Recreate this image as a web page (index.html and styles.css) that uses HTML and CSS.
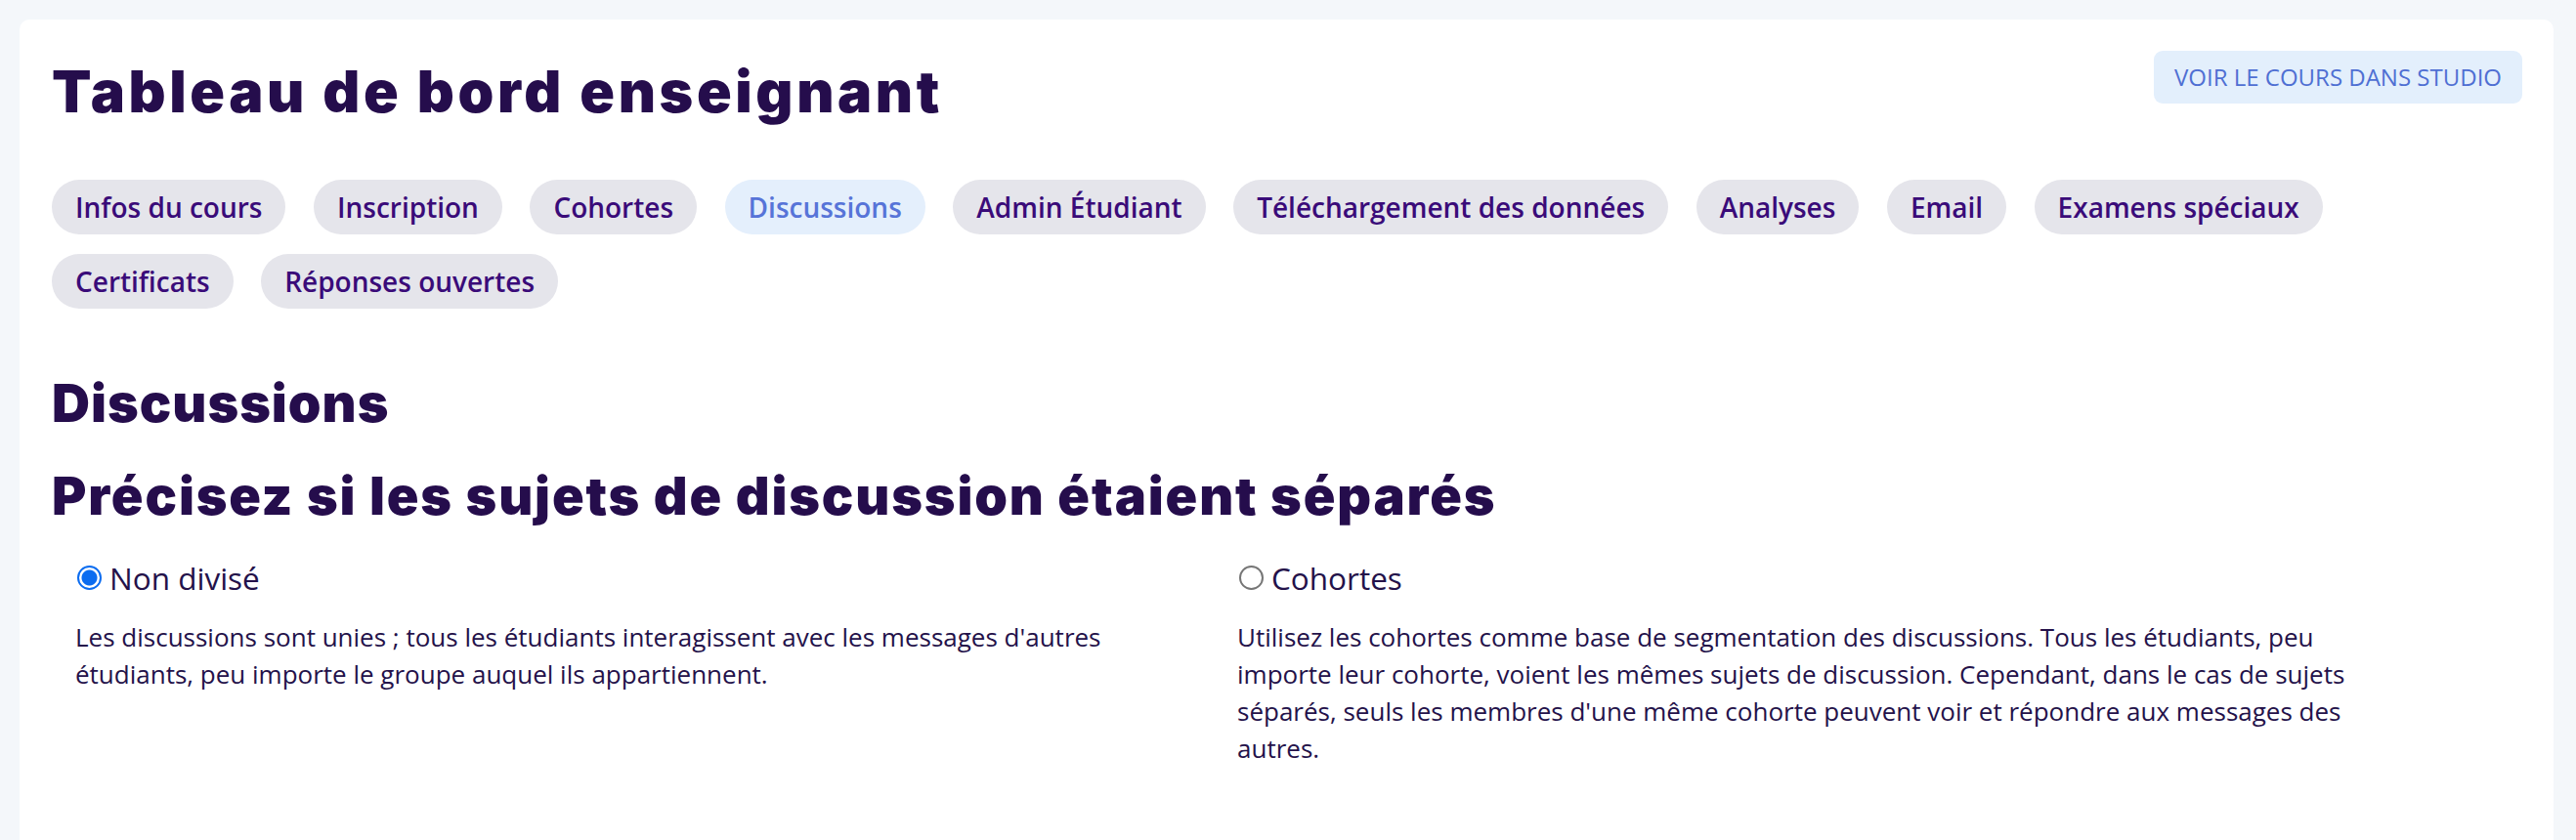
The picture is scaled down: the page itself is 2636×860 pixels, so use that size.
FILE: index.html
```html
<!DOCTYPE html>
<html lang="fr">
<head>
<meta charset="utf-8">
<title>Tableau de bord enseignant</title>
<link rel="stylesheet" href="styles.css">
</head>
<body>
<div class="page">
  <main class="card">
    <header class="header">
      <h1 class="title">Tableau de bord enseignant</h1>
      <a class="studio-btn" href="#">Voir le cours dans Studio</a>
    </header>
    <nav class="tabs">
      <a class="tab" href="#">Infos du cours</a>
      <a class="tab" href="#">Inscription</a>
      <a class="tab" href="#">Cohortes</a>
      <a class="tab tab-active" href="#">Discussions</a>
      <a class="tab" href="#">Admin Étudiant</a>
      <a class="tab" href="#">Téléchargement des données</a>
      <a class="tab" href="#">Analyses</a>
      <a class="tab" href="#">Email</a>
      <a class="tab" href="#">Examens spéciaux</a>
      <a class="tab" href="#">Certificats</a>
      <a class="tab" href="#">Réponses ouvertes</a>
    </nav>
    <section class="section">
      <h2 class="section-title">Discussions</h2>
      <h2 class="section-subtitle">Précisez si les sujets de discussion étaient séparés</h2>
      <div class="options">
        <div class="option">
          <label class="option-label">
            <input class="radio" type="radio" name="division" checked>
            <span>Non divisé</span>
          </label>
          <p class="option-desc">Les discussions sont unies ; tous les étudiants interagissent avec les messages d'autres étudiants, peu importe le groupe auquel ils appartiennent.</p>
        </div>
        <div class="option">
          <label class="option-label">
            <input class="radio" type="radio" name="division">
            <span>Cohortes</span>
          </label>
          <p class="option-desc">Utilisez les cohortes comme base de segmentation des discussions. Tous les étudiants, peu importe leur cohorte, voient les mêmes sujets de discussion. Cependant, dans le cas de sujets séparés, seuls les membres d'une même cohorte peuvent voir et répondre aux messages des autres.</p>
        </div>
      </div>
    </section>
  </main>
</div>
</body>
</html>
```

FILE: styles.css
```css
html, body {
  margin: 0;
  padding: 0;
  background: #f4f7fa;
  font-family: "Open Sans", "Liberation Sans", sans-serif;
}

.page {
  padding: 20px 23px 0 20px;
}

.card {
  background: #ffffff;
  border-radius: 10px;
  padding: 33px 32px 60px 33px;
  min-height: 900px;
  box-sizing: border-box;
}

.header {
  display: flex;
  justify-content: space-between;
  align-items: flex-start;
}

.title {
  margin: 0;
  font-family: "Inter", "DejaVu Sans", sans-serif;
  font-weight: 900;
  font-size: 59px;
  line-height: 81px;
  color: #250d4c;
  letter-spacing: 3.6px;
}

.studio-btn {
  display: block;
  margin-top: -1px;
  padding: 9px 21px;
  line-height: 36px;
  font-size: 24px;
  text-transform: uppercase;
  text-decoration: none;
  color: #4f6fd3;
  background: #e3effc;
  border-radius: 9px;
}

.tabs {
  display: flex;
  flex-wrap: wrap;
  column-gap: 28.5px;
  row-gap: 20px;
  margin-top: 50px;
}

.tab {
  display: block;
  padding: 8px 24px;
  line-height: 40px;
  font-size: 28px;
  font-weight: 600;
  color: #3a0b79;
  background: #e5e5eb;
  border-radius: 28px;
  text-decoration: none;
}

.tab-active {
  color: #5774d8;
  background: #e4effc;
}

.section {
  margin-top: 64px;
}

.section-title,
.section-subtitle {
  margin: 0;
  font-family: "Inter", "DejaVu Sans", sans-serif;
  font-weight: 900;
  font-size: 54px;
  line-height: 65px;
  color: #250d4c;
}

.section-title {
  letter-spacing: 1px;
}

.section-subtitle {
  margin-top: 30px;
  letter-spacing: 1.85px;
}

.options {
  display: grid;
  grid-template-columns: 1150px 1150px;
  column-gap: 39px;
  padding-left: 24px;
  margin-top: 29px;
}

.option-label {
  display: flex;
  align-items: center;
  gap: 8px;
  font-size: 31.5px;
  line-height: 45px;
  color: #24124a;
}

.radio {
  appearance: none;
  -webkit-appearance: none;
  margin: 0 0 0 2px;
  width: 25px;
  height: 25px;
  border-radius: 50%;
  border: 2.5px solid #767676;
  background: #ffffff;
  box-sizing: border-box;
  flex: none;
}

.radio:checked {
  border-color: #0b6cf0;
  background: radial-gradient(circle, #0b6cf0 0 7.5px, #ffffff 8.5px);
}

.option-desc {
  margin: 19px 0 0 0;
  font-size: 26px;
  line-height: 38px;
  color: #24124a;
}
```
